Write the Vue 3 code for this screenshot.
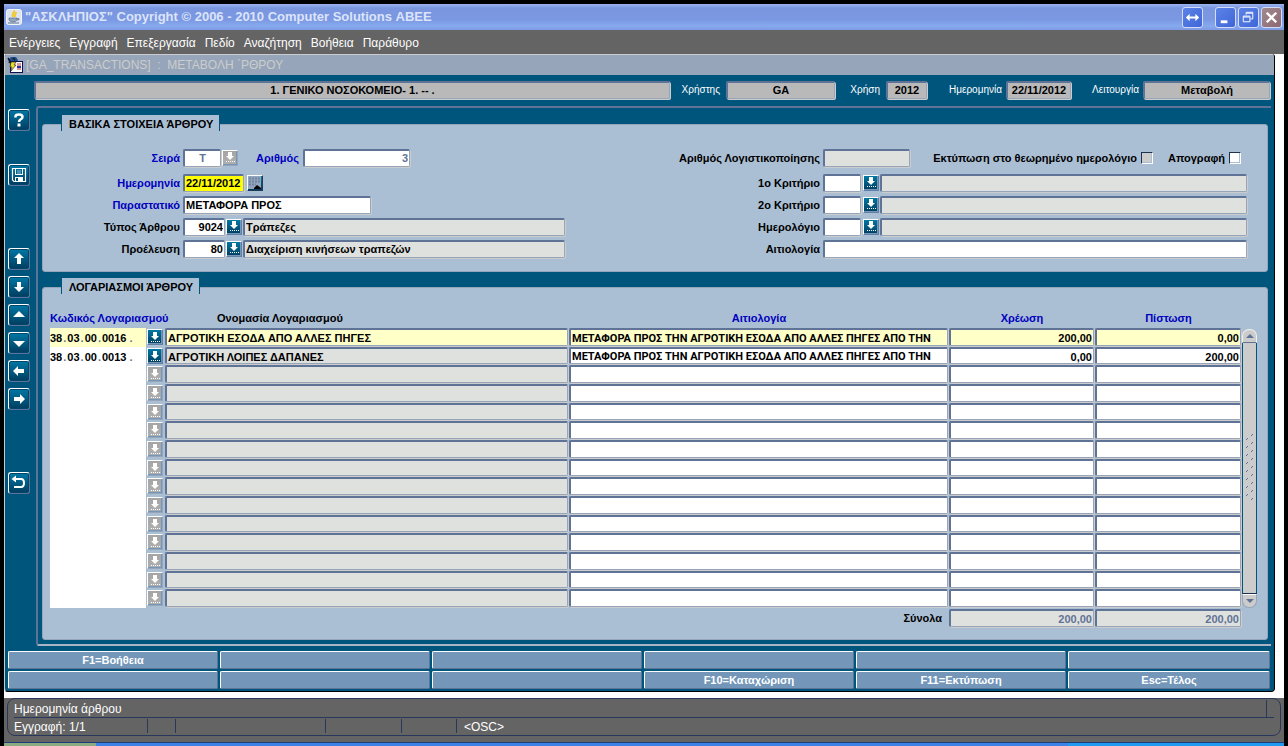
<script setup>
import { ref } from 'vue'

const menu = ['Ενέργειες', 'Εγγραφή', 'Επεξεργασία', 'Πεδίο', 'Αναζήτηση', 'Βοήθεια', 'Παράθυρο']

const tools = [
  { id: 'help', label: 'Βοήθεια' },
  { id: 'save', label: 'Αποθήκευση', far: 'save-gap' },
  { id: 'up', label: 'Πρώτη', far: 'wide-gap', d: 'M11 5L16 10H13V16H9V10H6Z' },
  { id: 'down', label: 'Τελευταία', d: 'M9 6H13V11H16L11 16L6 11H9Z' },
  { id: 'prev', label: 'Προηγούμενη', d: 'M11 7L17 13H5Z' },
  { id: 'next', label: 'Επόμενη', d: 'M5 9H17L11 15Z' },
  { id: 'left', label: 'Αριστερά', d: 'M5 11L10 6V9H16V13H10V16Z' },
  { id: 'right', label: 'Δεξιά', d: 'M17 11L12 6V9H6V13H12V16Z' },
  { id: 'undo', label: 'Επιστροφή', far: 'wide-gap' }
]

const header = ref({
  company: '1. ΓΕΝΙΚΟ ΝΟΣΟΚΟΜΕΙΟ- 1. -- .',
  user: 'GA',
  year: '2012',
  date: '22/11/2012',
  mode: 'Μεταβολή'
})

const form = ref({
  series: 'T',
  number: '3',
  date: '22/11/2012',
  document: 'ΜΕΤΑΦΟΡΑ ΠΡΟΣ',
  type: '9024',
  typeName: 'Τράπεζες',
  origin: '80',
  originName: 'Διαχείριση κινήσεων τραπεζών',
  reason: ''
})

const criteria = ref([
  { id: 'k1', label: '1ο Κριτήριο', code: '', name: '' },
  { id: 'k2', label: '2ο Κριτήριο', code: '', name: '' },
  { id: 'jr', label: 'Ημερολόγιο', code: '', name: '' }
])

const reasonText = 'ΜΕΤΑΦΟΡΑ ΠΡΟΣ ΤΗΝ ΑΓΡΟΤΙΚΗ ΕΣΟΔΑ ΑΠΟ ΑΛΛΕΣ ΠΗΓΕΣ ΑΠΟ ΤΗΝ'
const filled = [
  { code: ['38', '03', '00', '0016'], name: 'ΑΓΡΟΤΙΚΗ ΕΣΟΔΑ ΑΠΟ ΑΛΛΕΣ ΠΗΓΕΣ', reason: reasonText, debit: '200,00', credit: '0,00' },
  { code: ['38', '03', '00', '0013'], name: 'ΑΓΡΟΤΙΚΗ ΛΟΙΠΕΣ ΔΑΠΑΝΕΣ', reason: reasonText, debit: '0,00', credit: '200,00' }
]
const rows = ref(
  Array.from({ length: 15 }, (_, i) => filled[i] || { code: [], name: '', reason: '', debit: '', credit: '' })
)

const functionKeys = ['F1=Βοήθεια', '', '', '', '', '', '', '', '', 'F10=Καταχώριση', 'F11=Εκτύπωση', 'Esc=Τέλος']

const grip = Array.from({ length: 9 }, (_, i) => i * 8)
const arrow = 'M5 1H9V5H11L7 9L3 5H5Z'
</script>

<template>
  <div class="screen">
    <header class="titlebar">
      <svg class="java" viewBox="0 0 16 16" aria-hidden="true">
        <rect x="0.5" y="0.5" width="15" height="15" rx="2" fill="#dce4f0" stroke="#f4f4f4" />
        <path d="M8 1.500C9 3.500 5 5 7 8M10 3C10 5 8 5.500 9 8" fill="none" stroke="#f0c828" stroke-width="2" />
        <path d="M3 9H11V11Q10 13 7 13Q4 13 3 11ZM11 9.500H13V11H11" fill="#93a4bd" stroke="#5f7396" stroke-width="0.700" />
        <path d="M2 14H13" stroke="#5f7396" />
      </svg>
      <h1>"ΑΣΚΛΗΠΙΟΣ" Copyright © 2006 - 2010 Computer Solutions ΑΒΕΕ</h1>
      <button class="win swap" aria-label="Εναλλαγή">
        <svg viewBox="0 0 20 20"><path d="M3 10L7 6V9H13V6L17 10L13 14V11H7V14Z" fill="#fff" /></svg>
      </button>
      <button class="win" aria-label="Ελαχιστοποίηση">
        <svg viewBox="0 0 20 20"><rect x="5" y="13" width="7" height="3" fill="#fff" /></svg>
      </button>
      <button class="win" aria-label="Επαναφορά">
        <svg viewBox="0 0 20 20"><path d="M7.500 7V4.500H14.500V11.500H12M8 5.500H14M4.500 8.500H11.500V14.500H4.500ZM5 9.500H11" fill="none" stroke="#fff" /></svg>
      </button>
      <button class="win close" aria-label="Κλείσιμο">
        <svg viewBox="0 0 20 20"><path d="M5 5L15 15M15 5L5 15" stroke="#fff" stroke-width="2.500" /></svg>
      </button>
    </header>

    <nav class="menubar">
      <button v-for="m in menu" :key="m">{{ m }}</button>
    </nav>

    <main class="desk">
      <section class="window">
        <div class="window-title">
          <svg viewBox="0 0 16 16" aria-hidden="true">
            <path d="M1 3L4 0H9L11 3L10 6H3Z" fill="#20508c" />
            <path d="M1 1L3 4L2 6M6 1L8 3" stroke="#101828" stroke-width="1.500" fill="none" />
            <rect x="3.500" y="4.500" width="12" height="11" fill="#fff" stroke="#101050" />
            <path d="M10 7H14M10 9H14M10 12H14" stroke="#c03030" />
            <path d="M10 9H14V11H10Z" fill="#3030a0" />
            <path d="M4 5H9L7 8H9L4 14L5 10H3Z" fill="#f0e020" stroke="#303030" stroke-width="0.700" />
          </svg>
          <span>[GA_TRANSACTIONS]&nbsp; :&nbsp; ΜΕΤΑΒΟΛΗ ΄ΡΘΡΟΥ</span>
        </div>

        <div class="body">
          <div class="info">
            <input v-model="header.company" class="field info-field grow" aria-label="Εταιρεία" readonly />
            <label class="l-user" for="h-user">Χρήστης</label>
            <input id="h-user" v-model="header.user" class="field info-field w-user" readonly />
            <label class="l-year" for="h-year">Χρήση</label>
            <input id="h-year" v-model="header.year" class="field info-field w-year" readonly />
            <label class="l-date" for="h-date">Ημερομηνία</label>
            <input id="h-date" v-model="header.date" class="field info-field w-hdate" readonly />
            <label class="l-mode" for="h-mode">Λειτουργία</label>
            <input id="h-mode" v-model="header.mode" class="field info-field w-mode" readonly />
          </div>

          <div class="middle">
            <aside class="tools">
              <button v-for="t in tools" :key="t.id" class="tool" :class="t.far" :aria-label="t.label">
                <svg viewBox="0 0 22 22">
                  <path v-if="t.d" :d="t.d" fill="#fff" />
                  <template v-else-if="t.id === 'help'">
                    <path d="M7.500 8.500V7.500Q7.500 5.500 11 5.500Q14.500 5.500 14.500 8Q14.500 9.500 12.500 10.500Q11 11.500 11 13" fill="none" stroke="#fff" stroke-width="2.500" />
                    <rect x="9.500" y="14.500" width="3" height="3" fill="#fff" />
                  </template>
                  <template v-else-if="t.id === 'save'">
                    <path d="M4.500 4.500H17.500V17.500H6L4.500 16Z" fill="none" stroke="#fff" stroke-width="1.200" />
                    <rect x="7.500" y="4.500" width="7" height="6" fill="none" stroke="#fff" />
                    <path d="M9 7H13M9 9H13" stroke="#9fc0d4" />
                    <rect x="7" y="13" width="8" height="5" fill="#fff" />
                    <rect x="8" y="14" width="2" height="3" fill="#00557d" />
                  </template>
                  <template v-else>
                    <path d="M6 7H13Q16 7 16 11Q16 15 13 15H6" fill="none" stroke="#fff" stroke-width="2" />
                    <path d="M3.500 7L8 3.500V10.500Z" fill="#fff" />
                  </template>
                </svg>
              </button>
            </aside>

            <div class="frame">
              <section class="panel">
                <h2>ΒΑΣΙΚΑ ΣΤΟΙΧΕΙΑ ΆΡΘΡΟΥ</h2>
                <div class="halves">
                  <div class="half left">
                    <div class="row first">
                      <label class="cap blue" for="f-series">Σειρά</label>
                      <input id="f-series" v-model="form.series" class="field w-s dim center" />
                      <button class="lov off" aria-label="Λίστα σειρών" disabled>
                        <svg viewBox="0 0 13 13"><path :d="arrow" fill="#fff" /><path d="M3 10.500H12" stroke="#fff" stroke-dasharray="1 1" /></svg>
                      </button>
                      <label class="cap2 blue" for="f-num">Αριθμός</label>
                      <input id="f-num" v-model="form.number" class="field w-num dim right" />
                    </div>
                    <div class="row">
                      <label class="cap blue" for="f-date">Ημερομηνία</label>
                      <input id="f-date" v-model="form.date" class="field w-date yellow" />
                      <button class="lov cal" aria-label="Ημερολόγιο">
                        <svg viewBox="0 0 13 13"><rect width="13" height="13" fill="#93a4bd" /><path d="M1 2.500H12M1 5.500H12M1 8.500H8" stroke="#71849f" stroke-dasharray="2 1" stroke-width="2" /><path d="M6 13V12L9 9L13 12V13Z" fill="#000" /></svg>
                      </button>
                    </div>
                    <div class="row">
                      <label class="cap blue" for="f-doc">Παραστατικό</label>
                      <input id="f-doc" v-model="form.document" class="field w-doc" />
                    </div>
                    <div class="row">
                      <label class="cap" for="f-type">Τύπος Άρθρου</label>
                      <input id="f-type" v-model="form.type" class="field w-code right" />
                      <button class="lov" aria-label="Λίστα τύπων">
                        <svg viewBox="0 0 13 13"><path :d="arrow" fill="#fff" /><path d="M3 10.500H12" stroke="#fff" stroke-dasharray="1 1" /></svg>
                      </button>
                      <input v-model="form.typeName" class="field gray grow" aria-label="Περιγραφή τύπου" readonly />
                    </div>
                    <div class="row">
                      <label class="cap" for="f-org">Προέλευση</label>
                      <input id="f-org" v-model="form.origin" class="field w-code right" />
                      <button class="lov" aria-label="Λίστα προελεύσεων">
                        <svg viewBox="0 0 13 13"><path :d="arrow" fill="#fff" /><path d="M3 10.500H12" stroke="#fff" stroke-dasharray="1 1" /></svg>
                      </button>
                      <input v-model="form.originName" class="field gray grow" aria-label="Περιγραφή προέλευσης" readonly />
                    </div>
                  </div>

                  <div class="half wide">
                    <div class="row first">
                      <label class="cap" for="f-acc">Αριθμός Λογιστικοποίησης</label>
                      <input id="f-acc" class="field gray w-acc" readonly />
                      <span class="checks">
                        <label for="c-print">Εκτύπωση στο θεωρημένο ημερολόγιο</label>
                        <input id="c-print" class="check off" type="checkbox" disabled />
                        <label class="inv" for="c-inv">Απογραφή</label>
                        <input id="c-inv" class="check" type="checkbox" />
                      </span>
                    </div>
                    <div v-for="c in criteria" :key="c.id" class="row">
                      <label class="cap" :for="c.id">{{ c.label }}</label>
                      <input :id="c.id" v-model="c.code" class="field w-s" />
                      <button class="lov spaced" :aria-label="'Λίστα: ' + c.label">
                        <svg viewBox="0 0 13 13"><path :d="arrow" fill="#fff" /><path d="M3 10.500H12" stroke="#fff" stroke-dasharray="1 1" /></svg>
                      </button>
                      <input v-model="c.name" class="field gray grow" :aria-label="'Περιγραφή: ' + c.label" readonly />
                    </div>
                    <div class="row">
                      <label class="cap" for="f-reason">Αιτιολογία</label>
                      <input id="f-reason" v-model="form.reason" class="field grow" />
                    </div>
                  </div>
                </div>
              </section>

              <section class="panel accounts">
                <h2>ΛΟΓΑΡΙΑΣΜΟΙ ΆΡΘΡΟΥ</h2>
                <div class="grid-area">
                  <table>
                    <colgroup>
                      <col class="c-code" /><col class="c-btn" /><col class="c-name" /><col /><col class="c-debit" /><col class="c-credit" />
                    </colgroup>
                    <thead>
                      <tr>
                        <th class="blue start" colspan="2">Κωδικός Λογαριασμού</th>
                        <th class="name-head">Ονομασία Λογαριασμού</th>
                        <th class="blue">Αιτιολογία</th>
                        <th class="blue">Χρέωση</th>
                        <th class="blue">Πίστωση</th>
                      </tr>
                    </thead>
                    <tbody>
                      <tr v-for="(r, i) in rows" :key="i" :class="{ current: i === 0 }">
                        <td class="code"><div class="code-text"><template v-for="(p, k) in r.code" :key="k">{{ p }}<i :class="{ tail: k === 3 }">.</i></template></div></td>
                        <td>
                          <button class="lov" :class="{ off: !r.name }" :disabled="!r.name" :aria-label="'Λίστα λογαριασμών, γραμμή ' + (i + 1)">
                            <svg viewBox="0 0 13 13"><path :d="arrow" fill="#fff" /><path d="M3 10.500H12" stroke="#fff" stroke-dasharray="1 1" /></svg>
                          </button>
                        </td>
                        <td><input v-model="r.name" class="field gray" aria-label="Ονομασία" readonly /></td>
                        <td><input v-model="r.reason" class="field reason" aria-label="Αιτιολογία" /></td>
                        <td><input v-model="r.debit" class="field right" aria-label="Χρέωση" /></td>
                        <td><input v-model="r.credit" class="field right" aria-label="Πίστωση" /></td>
                      </tr>
                    </tbody>
                    <tfoot>
                      <tr>
                        <th class="total" colspan="4">Σύνολα</th>
                        <td><input class="field gray dim right" value="200,00" aria-label="Σύνολο χρέωσης" readonly /></td>
                        <td><input class="field gray dim right" value="200,00" aria-label="Σύνολο πίστωσης" readonly /></td>
                      </tr>
                    </tfoot>
                  </table>
                  <div class="scroll">
                    <button class="cap-up" aria-label="Πάνω"><svg viewBox="0 0 8 4"><path d="M0 4L4 0L8 4Z" fill="#5f7396" /></svg></button>
                    <div class="track">
                      <svg viewBox="0 0 8 68">
                        <path v-for="y in grip" :key="y" :d="`M5 ${y + 2}L7 ${y}M0 ${y + 6}L2 ${y + 4}`" stroke="#5f7396" fill="none" />
                      </svg>
                    </div>
                    <button class="cap-down" aria-label="Κάτω"><svg viewBox="0 0 8 4"><path d="M0 0L4 4L8 0Z" fill="#5f7396" /></svg></button>
                  </div>
                </div>
              </section>
            </div>
          </div>

          <div class="keys">
            <button v-for="(k, i) in functionKeys" :key="i">{{ k }}</button>
          </div>
        </div>
      </section>
    </main>

    <footer class="status">
      <div class="status-box">
        <div class="line top"><span class="msg">Ημερομηνία άρθρου</span><span class="end"></span></div>
        <div class="line bottom">
          <span class="s1">Εγγραφή: 1/1</span><span class="s2"></span><span class="s3"></span><span class="s4"></span><span class="s5"></span><span class="s6">&lt;OSC&gt;</span>
        </div>
      </div>
    </footer>
    <div class="taskbar"><span class="start-edge"></span><span class="tasks"></span><span class="tray"></span></div>
  </div>
</template>

<style>
body {
  margin: 0;
  background: #000;
}
</style>

<style scoped>
* {
  box-sizing: border-box;
}
.screen {
  min-height: 100vh;
  padding: 4px 4px 0;
  background: #000;
  font-family: 'Liberation Sans', Arial, sans-serif;
  font-size: 11px;
  font-weight: bold;
  color: #000;
}
button,
input {
  font: inherit;
  margin: 0;
  padding: 0;
  border: 0;
  border-radius: 0;
}
.titlebar {
  display: flex;
  align-items: center;
  height: 26px;
  padding: 0 2px;
  background: linear-gradient(#9cb4f0 0, #7a96df 4px, #7b98e2 60%, #86aaee 85%, #7e9ae4);
}
.java {
  width: 16px;
  height: 16px;
}
h1 {
  flex: 1;
  margin: 0 0 0 3px;
  font-size: 13px;
  line-height: 16px;
  color: #dce4fa;
  white-space: nowrap;
}
.win {
  width: 21px;
  height: 21px;
  margin-left: 2px;
  border: 1px solid #d4dcf6;
  border-radius: 3px;
  background: linear-gradient(135deg, #5c83e6, #3f66d8);
}
.win svg {
  display: block;
}
.swap {
  margin-right: 10px;
}
.close {
  background: linear-gradient(135deg, #a08a90, #8e6872);
}
.menubar {
  display: flex;
  gap: 9px;
  height: 24px;
  padding: 1px 0 0 5px;
  background: #646464;
}
.menubar button {
  background: none;
  font-size: 12px;
  font-weight: normal;
  color: #fff;
}
.desk {
  padding: 0 9px 6px 0;
  background: #fff;
}
.window {
  border-left: 1px solid #ccc;
  border-right: 1px solid #000;
  border-bottom: 1px solid #000;
  border-radius: 3px 3px 4px 4px;
  background: #00557d;
  overflow: hidden;
}
.window-title {
  display: flex;
  align-items: center;
  height: 21px;
  padding-left: 2px;
  border-top: 1px solid #ccc;
  background: #96a5b9;
  color: #ccc;
  font-size: 12px;
  font-weight: normal;
  white-space: nowrap;
}
.window-title svg {
  width: 16px;
  height: 16px;
  margin-right: 3px;
}
.body {
  padding: 5px 3px 2px;
}
.field {
  min-width: 0;
  height: 18px;
  margin-right: 1px;
  padding: 1px 1px 0;
  border: 1px solid #96a5b9;
  border-top: 2px solid #5f7396;
  border-left: 2px solid #5f7396;
  border-radius: 2px;
  background: #fff;
  box-shadow: 1px 1px 0 #ccc;
  color: #000;
  outline: 0;
}
.reason {
  font-family: Roboto, 'Liberation Sans', sans-serif;
}
.gray {
  background: #dfe1de;
}
.dim {
  color: #5f7396;
}
.yellow {
  background: #ff0;
}
.center {
  text-align: center;
}
.right {
  text-align: right;
}
.grow {
  flex: 1;
}
.blue {
  color: #0000be;
}
.info {
  display: flex;
  align-items: center;
  height: 19px;
  padding-left: 26px;
  color: #fff;
}
.info label {
  font-size: 10px;
  font-weight: normal;
  text-align: right;
  white-space: nowrap;
  padding-right: 6px;
}
.info .l-user { width: 54px; }
.info .l-year { width: 49px; }
.info .l-date { width: 77px; padding-right: 4px; }
.info .l-mode { width: 70px; padding-right: 4px; }
.info .info-field {
  margin-right: 2px;
  padding-top: 0;
  background: #b9b9b9;
  text-align: center;
}
.w-user { width: 109px; }
.w-year { width: 41px; }
.w-hdate { width: 65px; }
.info .w-mode { width: 127px; margin-right: 1px; }
.middle {
  display: flex;
  margin-top: 7px;
}
.tools {
  display: flex;
  flex-direction: column;
  gap: 6px;
  width: 28px;
  padding-top: 3px;
}
.tool {
  width: 22px;
  height: 22px;
  border: 1px solid #5f7396;
  border-top-color: #fff;
  border-left-color: #fff;
  border-radius: 3px;
  background: linear-gradient(#0078a5, #003c5f);
  box-shadow: inset 0 0 0 1px #00466e;
}
.tool svg {
  display: block;
  width: 22px;
  height: 22px;
  margin: -1px;
}
.save-gap {
  margin-top: 27px;
}
.wide-gap {
  margin-top: 56px;
}
.frame {
  flex: 1;
  min-width: 0;
  padding: 16px 3px 4px 4px;
  border-top: 2px solid #5f7396;
  border-left: 2px solid #5f7396;
  border-bottom: 2px solid #a8b3c4;
  border-radius: 3px 0 0 3px;
}
.panel {
  padding-bottom: 13px;
  border: 1px solid #96a5b9;
  border-radius: 3px;
  background: #aabfd4;
}
.panel h2 {
  width: max-content;
  height: 16px;
  margin: -10px 0 0 18px;
  padding: 1px 6px 0 7px;
  border-left: 1px solid #00557d;
  border-right: 1px solid #00557d;
  background: #aabfd4;
  font-size: 11px;
  line-height: 17px;
}
.accounts {
  margin-top: 15px;
  padding-bottom: 11px;
}
.halves {
  display: flex;
  padding: 17px 19px 0 0;
}
.half {
  display: flex;
  flex-direction: column;
  gap: 3px;
}
.left {
  width: 523px;
}
.wide {
  flex: 1;
}
.row {
  display: flex;
  align-items: center;
  height: 19px;
}
.row .field {
  padding-top: 0;
}
.first {
  margin-bottom: 3px;
}
.cap {
  width: 137px;
  margin-right: 3px;
  text-align: right;
  white-space: nowrap;
}
.wide .cap {
  width: 254px;
}
.cap2 {
  width: 60px;
  margin-right: 4px;
  text-align: right;
}
.w-s { width: 38px; }
.w-num { width: 107px; }
.w-date { width: 61px; }
.w-doc { width: 188px; }
.w-code { width: 42px; }
.w-acc { width: 87px; }
.lov {
  flex: none;
  display: block;
  width: 16px;
  height: 16px;
  margin-right: 1px;
  border: 1px solid #5f7fa5;
  border-top-color: #fff;
  border-left-color: #fff;
  background: linear-gradient(#0078a5, #003c5f);
  box-shadow: inset -1px -1px 0 #7396b9;
}
.lov svg {
  display: block;
  width: 13px;
  height: 13px;
}
.lov.off {
  background: linear-gradient(#a5a5a5, #afafaf);
  border-right-color: #96a5b9;
  border-bottom-color: #96a5b9;
}
.lov.cal {
  margin-left: 2px;
  border-color: #fff #1e3c5a #1e3c5a #fff;
  box-shadow: none;
}
.lov.spaced {
  margin-left: 1px;
}
td .lov {
  margin-top: 1px;
}
.checks {
  display: flex;
  flex: 1;
  align-items: center;
  justify-content: flex-end;
  padding-right: 7px;
  white-space: nowrap;
}
.inv {
  margin-left: 15px;
}
.check {
  appearance: none;
  width: 12px;
  height: 12px;
  margin-left: 4px;
  border: 1px solid #1e3250;
  border-right-color: #fff;
  border-bottom-color: #fff;
  background: #fff;
  box-shadow: inset -1px -1px 0 #aabfd4;
}
.check.off {
  background: #ccc;
}
.grid-area {
  display: flex;
  padding: 16px 10px 0 7px;
}
table {
  flex: 1;
  table-layout: fixed;
  border-collapse: collapse;
  width: 0;
}
th,
td {
  padding: 0;
  white-space: nowrap;
}
.c-code { width: 97px; }
.c-btn { width: 18px; }
.c-name { width: 404px; }
.c-debit { width: 146px; }
.c-credit { width: 147px; }
thead tr {
  height: 18px;
}
thead th {
  padding-bottom: 2px;
}
.start,
.name-head {
  text-align: left;
}
.name-head {
  padding-left: 52px;
}
td .field {
  display: block;
  width: calc(100% - 1px);
}
tbody tr {
  height: 19px;
}
tbody td {
  height: 19px;
  vertical-align: top;
}
tbody tr:nth-child(3n + 2),
tbody tr:nth-child(3n + 2) td {
  height: 18px;
}
tbody tr:nth-child(3n + 2) .field {
  height: 17px;
}
.code {
  padding: 0 1px 0 0;
  background: #fff;
  background-clip: content-box;
}
.code-text {
  height: 18px;
  padding-top: 2px;
  line-height: 16px;
}
.code i {
  padding: 0 1px;
  font-style: normal;
  color: #5f7396;
}
.code .tail {
  padding-left: 3px;
}
.current .code,
.current .field {
  background-color: #ffffc8;
}
.total {
  padding-right: 7px;
  text-align: right;
}
tfoot tr {
  height: 20px;
}
.scroll {
  display: flex;
  flex-direction: column;
  width: 15px;
  height: 279px;
  margin-top: 19px;
}
.scroll button {
  height: 14px;
  border: 1px solid #f0f0f0;
  border-bottom-color: #5f7396;
  border-radius: 7px 7px 0 0;
  background: #ccc;
}
.scroll .cap-down {
  border-color: #fff #96a5b9 #96a5b9 #96a5b9;
  border-radius: 0 0 7px 7px;
}
.scroll button svg {
  display: block;
  width: 8px;
  height: 4px;
  margin: 0 auto;
}
.track {
  display: flex;
  flex: 1;
  align-items: center;
  justify-content: center;
  border-left: 1px solid #00557d;
  border-right: 1px solid #00557d;
  border-bottom: 1px solid #1e3250;
  background: #ccc;
}
.track svg {
  width: 8px;
  height: 68px;
}
.keys {
  display: grid;
  grid-template-columns: repeat(5, 210fr) 202fr;
  gap: 2px;
  margin-top: 5px;
  padding-right: 1px;
}
.keys button {
  height: 18px;
  border: 1px solid #5f7396;
  border-top-color: #fff;
  border-left-color: #fff;
  border-radius: 2px;
  background: #7396b9;
  color: #fff;
}
.status {
  height: 44px;
  padding: 0 3px;
  background: #646464;
  color: #fff;
  font-size: 12px;
  font-weight: normal;
}
.status-box {
  height: 38px;
  padding: 0 6px;
  border: 1px solid #28375a;
  border-radius: 8px;
}
.line {
  display: flex;
  height: 18px;
  line-height: 20px;
}
.top {
  height: 19px;
  border-bottom: 1px solid #28375a;
}
.end {
  margin: 1px 7px 0 auto;
  border-left: 1px solid #28375a;
}
.bottom span {
  height: 14px;
  margin-top: 1px;
  line-height: 17px;
  border-left: 1px solid #28375a;
}
.bottom .s1 {
  width: 133px;
  border-left: 0;
}
.s2 { width: 28px; }
.s3 { width: 150px; }
.s4 { width: 76px; }
.s5 { width: 55px; }
.s6 {
  padding-left: 7px;
}
.taskbar {
  display: flex;
  height: 4px;
  border-top: 1px solid #1e3c78;
}
.start-edge {
  width: 92px;
  background: #8caa82;
}
.tasks {
  flex: 1;
  background: #3c82e6;
}
.tray {
  width: 216px;
  background: #1e9bf0;
}
</style>
